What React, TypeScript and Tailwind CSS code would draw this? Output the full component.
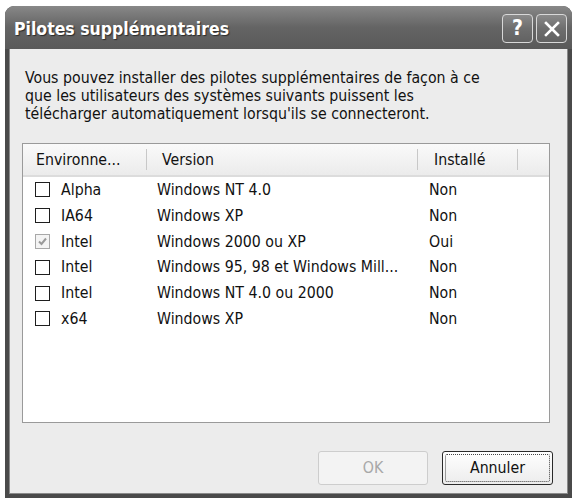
import React from 'react';

// Driver rows shown in the list view
interface DriverRow {
  env: string;
  version: string;
  installed: string;
  checked: boolean;
}

const rows: DriverRow[] = [
  { env: 'Alpha', version: 'Windows NT 4.0', installed: 'Non', checked: false },
  { env: 'IA64', version: 'Windows XP', installed: 'Non', checked: false },
  { env: 'Intel', version: 'Windows 2000 ou XP', installed: 'Oui', checked: true },
  { env: 'Intel', version: 'Windows 95, 98 et Windows Mill...', installed: 'Non', checked: false },
  { env: 'Intel', version: 'Windows NT 4.0 ou 2000', installed: 'Non', checked: false },
  { env: 'x64', version: 'Windows XP', installed: 'Non', checked: false },
];

const uiFont = { fontFamily: '"DejaVu Sans Condensed", "DejaVu Sans", sans-serif' };

function CheckBox({ checked }: { checked: boolean }) {
  if (checked) {
    return (
      <div className="w-[15px] h-[15px] border border-[#a8a8a8] bg-[#f4f4f4] flex items-center justify-center">
        <svg width="11" height="11" viewBox="0 0 11 11">
          <path d="M2 5.5 L4.5 8 L9 2.5" stroke="#9a9a9a" strokeWidth="2" fill="none" />
        </svg>
      </div>
    );
  }
  return <div className="w-[15px] h-[15px] border-[1.5px] border-[#1e1e1e] bg-white" />;
}

function TitleButton({ children }: { children: React.ReactNode }) {
  return (
    <div className="w-[31px] h-[29px] rounded-[4px] border border-[#d8d8d8] bg-gradient-to-b from-[#8a8a8a] via-[#6e6e6e] to-[#626262] flex items-center justify-center">
      {children}
    </div>
  );
}

export default function App() {
  return (
    <div className="w-[576px] h-[500px] bg-white pt-[6px] pl-[5px]" style={uiFont}>
      <div className="w-[567px] h-[492px] rounded-t-[9px] bg-[#4a4a4a] flex flex-col overflow-hidden">
        {/* Title bar */}
        <div className="h-[43px] shrink-0 flex items-center justify-between pl-[9px] pr-[5px] bg-gradient-to-b from-[#888888] via-[#646464] to-[#595959]">
          <span
            className="text-white font-bold text-[17.5px] mt-[3px] [text-shadow:1px_1px_1px_#2a2a2a]"
            style={uiFont}
          >
            Pilotes supplémentaires
          </span>
          <div className="flex gap-[3px] mt-[2px]">
            <TitleButton>
              <span className="text-white font-bold text-[21px] leading-none">?</span>
            </TitleButton>
            <TitleButton>
              <svg width="18" height="18" viewBox="0 0 18 18">
                <path d="M3 3 L15 15 M15 3 L3 15" stroke="white" strokeWidth="2.6" strokeLinecap="square" />
              </svg>
            </TitleButton>
          </div>
        </div>

        {/* Dialog body */}
        <div className="flex-1 mx-[4px] mb-[4px] bg-[#ececec] border-l border-r border-b border-[#8a8a8a] flex flex-col">
          <p className="pl-[15px] pt-[20px] text-[15.75px] leading-[18px] text-[#111]">
            Vous pouvez installer des pilotes supplémentaires de façon à ce
            <br />
            que les utilisateurs des systèmes suivants puissent les
            <br />
            télécharger automatiquement lorsqu'ils se connecteront.
          </p>

          {/* List view */}
          <div className="ml-[12px] mt-[20px] w-[528px] h-[280px] border border-[#9a9a9a] bg-white flex flex-col text-[15.75px] text-[#111]">
            <div className="h-[33px] flex items-center bg-gradient-to-b from-[#fafafa] to-[#ebebeb] border-b-[2px] border-[#dcdcdc]">
              <div className="w-[124px] pl-[13px] border-r border-[#c8c8c8] h-[21px] flex items-center">Environne...</div>
              <div className="w-[271px] pl-[15px] border-r border-[#c8c8c8] h-[21px] flex items-center">Version</div>
              <div className="w-[100px] pl-[16px] border-r border-[#c8c8c8] h-[21px] flex items-center">Installé</div>
            </div>
            <div>
              {rows.map((r, i) => (
                <div key={i} className="h-[25.8px] flex items-center">
                  <div className="w-[124px] pl-[12px] flex items-center gap-[11px]">
                    <CheckBox checked={r.checked} />
                    <span>{r.env}</span>
                  </div>
                  <div className="w-[271px] pl-[10px]">{r.version}</div>
                  <div className="w-[100px] pl-[11px]">{r.installed}</div>
                </div>
              ))}
            </div>
          </div>

          {/* Buttons */}
          <div className="flex justify-end gap-[14px] mt-[28px] pr-[14px] text-[15.75px]">
            <button className="w-[110px] h-[34px] rounded-[3px] border border-[#cdcdcd] bg-[#f3f3f3] text-[#a8a8a8]">
              OK
            </button>
            <button className="w-[111px] h-[34px] rounded-[3px] border border-[#2a2a2a] bg-gradient-to-b from-[#ffffff] to-[#ececec] p-[2px]">
              <div className="w-full h-full border border-dotted border-[#444] rounded-[2px] flex items-center justify-center text-[#111]">
                Annuler
              </div>
            </button>
          </div>
        </div>
      </div>
    </div>
  );
}
